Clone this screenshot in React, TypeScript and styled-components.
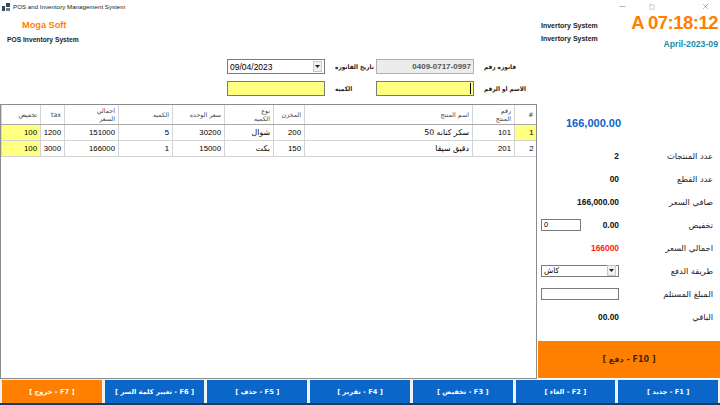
import React from 'react'
import styled, { createGlobalStyle } from 'styled-components'
import { Minus, Square, X } from 'lucide-react'

const GlobalStyle = createGlobalStyle`
  html, body {
    margin: 0;
    padding: 0;
    background: #fff;
  }
  body {
    width: 720px;
    height: 405px;
    overflow: hidden;
    font-family: 'DejaVu Sans', 'Liberation Sans', sans-serif;
  }
`

const Window = styled.div`
  width: 720px;
  height: 405px;
  display: flex;
  flex-direction: column;
  background: #fff;
`

const TitleBar = styled.div`
  height: 13px;
  display: flex;
  align-items: center;
  padding-left: 2px;
`

const TitleText = styled.span`
  flex: 1;
  margin-left: 3px;
  font-family: 'Liberation Sans', sans-serif;
  font-size: 6.2px;
  color: #222;
`

const WinButton = styled.span<{ $gap?: number }>`
  width: 29px;
  margin-left: ${p => p.$gap || 0}px;
  display: flex;
  justify-content: center;
  color: #444;
`

const TopRow = styled.div`
  height: 42px;
  display: flex;
`

const Brand = styled.div`
  flex: 1;
  display: flex;
  flex-direction: column;
  padding-left: 7px;
  font-family: 'Liberation Sans', sans-serif;
  font-weight: bold;
`

const BrandName = styled.div`
  margin: 7px 0 0 15px;
  font-size: 9.2px;
  color: #ff7f00;
`

const BrandSub = styled.div`
  margin-top: 6px;
  font-size: 6.7px;
  color: #222;
`

const SysLabels = styled.div`
  width: 87px;
  display: flex;
  flex-direction: column;
  gap: 6px;
  padding-top: 9px;
  font-family: 'Liberation Sans', sans-serif;
  font-weight: bold;
  font-size: 7px;
  color: #222;
`

const ClockBox = styled.div`
  width: 90px;
  display: flex;
  flex-direction: column;
  align-items: flex-end;
  padding-right: 2px;
  font-family: 'Liberation Sans', sans-serif;
  font-weight: bold;
`

const Clock = styled.div`
  font-size: 18.5px;
  letter-spacing: -0.5px;
  line-height: 20px;
  color: #ff7f00;
`

const DateText = styled.div`
  margin-top: 6px;
  font-size: 8.7px;
  color: #1a8ca8;
`

const Form = styled.div`
  display: grid;
  grid-template-columns: 98px 51px 98px auto;
  grid-auto-rows: 15px;
  row-gap: 7px;
  margin: 4px 0 8px 227px;
  align-items: center;
`

const FieldLabel = styled.div`
  padding-left: 10px;
  font-family: 'DejaVu Sans Condensed', 'DejaVu Sans', sans-serif;
  font-stretch: condensed;
  font-size: 6.4px;
  font-weight: bold;
  color: #222;
  white-space: nowrap;
`

const TextBox = styled.div<{ $bg?: string }>`
  width: 98px;
  height: 15px;
  box-sizing: border-box;
  border: 1px solid #7a7a7a;
  background: ${p => p.$bg || '#fff'};
  display: flex;
  align-items: center;
  padding: 0 2px;
  font-family: 'Liberation Sans', sans-serif;
  font-size: 8.5px;
  color: #000;
`

const InvoiceBox = styled(TextBox)`
  justify-content: flex-end;
  border-color: #b0b0b0;
  font-weight: bold;
  font-size: 8px;
  color: #555;
`

const Caret = styled.span`
  margin-left: auto;
  width: 1px;
  height: 11px;
  background: #000;
`

const DropButton = styled.span`
  margin-left: auto;
  width: 9px;
  height: 11px;
  box-sizing: border-box;
  border: 1px solid #c8c8c8;
  background: #f2f2f2;
  display: flex;
  align-items: center;
  justify-content: center;
`

const Main = styled.div`
  height: 275px;
  display: flex;
`

const GridBox = styled.div`
  width: 537px;
  height: 275px;
  box-sizing: border-box;
  border: 1px solid #8c8c8c;
  overflow: hidden;
  background: #fff;
`

const Table = styled.table`
  direction: rtl;
  width: 535px;
  table-layout: fixed;
  border-collapse: collapse;
`

const HeadCell = styled.th`
  height: 19px;
  padding: 0 3px;
  border-left: 1px solid #d4d4d4;
  border-bottom: 1px solid #a8a8a8;
  text-align: right;
  vertical-align: middle;
  font-weight: normal;
  font-size: 6.3px;
  line-height: 8px;
  color: #444;
  overflow: hidden;
`

const Cell = styled.td<{ $hl?: boolean }>`
  height: 15px;
  padding: 0 3px;
  border-left: 1px solid #d4d4d4;
  border-bottom: 1px solid #d4d4d4;
  background: ${p => (p.$hl ? '#ffff80' : '#fff')};
  text-align: right;
  font-family: 'Liberation Sans', 'DejaVu Sans', sans-serif;
  font-size: 7.8px;
  color: #000;
  white-space: nowrap;
  overflow: hidden;
`

const ArabicCell = styled(Cell)`
  font-family: 'DejaVu Sans', sans-serif;
  font-size: 7.8px;
`

const Side = styled.div`
  flex: 1;
  display: flex;
  flex-direction: column;
`

const GrandTotal = styled.div`
  height: 22px;
  margin: 8px 0 10px 29px;
  display: flex;
  align-items: center;
  font-family: 'Liberation Sans', sans-serif;
  font-weight: bold;
  font-size: 11px;
  color: #0b63c4;
`

const SumRow = styled.div`
  height: 23px;
  display: flex;
  align-items: center;
  padding-left: 4px;
`

const SumValue = styled.div<{ $color?: string }>`
  width: 78px;
  display: flex;
  align-items: center;
  justify-content: space-between;
  font-family: 'Liberation Sans', sans-serif;
  font-weight: bold;
  font-size: 8.4px;
  color: ${p => p.$color || '#111'};
`

const SumLabel = styled.div`
  flex: 1;
  direction: rtl;
  text-align: right;
  padding-right: 7px;
  font-size: 8.3px;
  color: #222;
`

const SmallInput = styled.div<{ $w: number }>`
  width: ${p => p.$w}px;
  height: 12px;
  box-sizing: border-box;
  border: 1px solid #7a7a7a;
  background: #fff;
  display: flex;
  align-items: center;
  padding: 0 2px;
  font-family: 'Liberation Sans', 'DejaVu Sans', sans-serif;
  font-weight: normal;
  font-size: 7.5px;
  color: #000;
`

const PayButton = styled.div`
  height: 37px;
  margin: auto 0 1px 1px;
  background: #ff8000;
  display: flex;
  align-items: center;
  justify-content: center;
  direction: rtl;
  font-weight: bold;
  font-size: 8px;
  color: #4a2600;
`

const FKeyBar = styled.div`
  height: 26px;
  box-sizing: border-box;
  display: flex;
  direction: rtl;
  gap: 3px;
  padding: 1px 2px 0;
  background: #eef2f6;
  border-bottom: 2px solid #1d3a5c;
`

const FKey = styled.div<{ $accent?: boolean }>`
  flex: 1;
  height: 23px;
  display: flex;
  align-items: center;
  justify-content: center;
  background: ${p => (p.$accent ? '#ff8000' : '#0a66c8')};
  color: #fff;
  font-weight: bold;
  font-size: 6.7px;
`

const AppIcon = () => (
  <svg width="8" height="8" viewBox="0 0 8 8">
    <rect x="0" y="3" width="3" height="5" fill="#3a4a5c" />
    <rect x="4" y="0" width="4" height="4" fill="#3a4a5c" />
    <rect x="4" y="5" width="4" height="3" fill="#6b7b8c" />
  </svg>
)

const DownArrow = () => (
  <svg width="5" height="3" viewBox="0 0 5 3">
    <path d="M0 0 L5 0 L2.5 3 Z" fill="#222" />
  </svg>
)

interface Column {
  title: React.ReactNode
  width: number
}

const columns: Column[] = [
  { title: '#', width: 22 },
  { title: <>رقم<br />المنتج</>, width: 42 },
  { title: 'اسم المنتج', width: 168 },
  { title: 'المخزن', width: 31 },
  { title: <>نوع<br />الكميه</>, width: 49 },
  { title: 'سعر الوحده', width: 52 },
  { title: 'الكميه', width: 54 },
  { title: <>اجمالي<br />السعر</>, width: 54 },
  { title: 'tax', width: 24 },
  { title: 'تخفيض', width: 39 }
]

const items = [
  { no: '1', code: '101', name: 'سكر كنانه 50', stock: '200', unit: 'شوال', price: '30200', qty: '5', total: '151000', tax: '1200', disc: '100' },
  { no: '2', code: '201', name: 'دقيق سيقا', stock: '150', unit: 'بكت', price: '15000', qty: '1', total: '166000', tax: '3000', disc: '100' }
]

const fKeys = [
  '[ F1 - جديد ]',
  '[ F2 - الغاء ]',
  '[ F3 - تخفيض ]',
  '[ F4 - تقرير ]',
  '[ F5 - حذف ]',
  '[ F6 - تغيير كلمة السر ]',
  '[ F7 - خروج ]'
]

const App: React.FC = () => {
  return (
    <Window>
      <GlobalStyle />
      <TitleBar>
        <AppIcon />
        <TitleText>POS and Inventory Management System</TitleText>
        <WinButton><Minus size={9} strokeWidth={1} /></WinButton>
        <WinButton><Square size={6} strokeWidth={1} /></WinButton>
        <WinButton $gap={25}><X size={9} strokeWidth={1} /></WinButton>
      </TitleBar>

      <TopRow>
        <Brand>
          <BrandName>Moga Soft</BrandName>
          <BrandSub>POS Inventory System</BrandSub>
        </Brand>
        <SysLabels>
          <div>Invertory System</div>
          <div>Invertory System</div>
        </SysLabels>
        <ClockBox>
          <Clock>A 07:18:12</Clock>
          <DateText>April-2023-09</DateText>
        </ClockBox>
      </TopRow>

      <Form>
        <TextBox>
          09/04/2023
          <DropButton><DownArrow /></DropButton>
        </TextBox>
        <FieldLabel>تاريخ الفاتوره</FieldLabel>
        <InvoiceBox $bg="#ececec">0409-0717-0997</InvoiceBox>
        <FieldLabel>فاتوره رقم</FieldLabel>
        <TextBox $bg="#ffff80" />
        <FieldLabel>الكميه</FieldLabel>
        <TextBox $bg="#ffff80">
          <Caret />
        </TextBox>
        <FieldLabel>الاسم او الرقم</FieldLabel>
      </Form>

      <Main>
        <GridBox>
          <Table>
            <colgroup>
              {columns.map((c, i) => (
                <col key={i} style={{ width: c.width }} />
              ))}
            </colgroup>
            <thead>
              <tr>
                {columns.map((c, i) => (
                  <HeadCell key={i}>{c.title}</HeadCell>
                ))}
              </tr>
            </thead>
            <tbody>
              {items.map((r, i) => (
                <tr key={r.no}>
                  <Cell $hl={i === 0}>{r.no}</Cell>
                  <Cell>{r.code}</Cell>
                  <ArabicCell>{r.name}</ArabicCell>
                  <Cell>{r.stock}</Cell>
                  <ArabicCell>{r.unit}</ArabicCell>
                  <Cell>{r.price}</Cell>
                  <Cell>{r.qty}</Cell>
                  <Cell>{r.total}</Cell>
                  <Cell>{r.tax}</Cell>
                  <Cell $hl>{r.disc}</Cell>
                </tr>
              ))}
            </tbody>
          </Table>
        </GridBox>

        <Side>
          <GrandTotal>166,000.00</GrandTotal>
          <SumRow>
            <SumValue><span /><span>2</span></SumValue>
            <SumLabel>عدد المنتجات</SumLabel>
          </SumRow>
          <SumRow>
            <SumValue><span /><span>00</span></SumValue>
            <SumLabel>عدد القطع</SumLabel>
          </SumRow>
          <SumRow>
            <SumValue><span /><span>166,000.00</span></SumValue>
            <SumLabel>صافي السعر</SumLabel>
          </SumRow>
          <SumRow>
            <SumValue>
              <SmallInput $w={40}>0</SmallInput>
              <span>0.00</span>
            </SumValue>
            <SumLabel>تخفيض</SumLabel>
          </SumRow>
          <SumRow>
            <SumValue $color="#ff1a1a"><span /><span>166000</span></SumValue>
            <SumLabel>اجمالي السعر</SumLabel>
          </SumRow>
          <SumRow>
            <SumValue>
              <SmallInput $w={79}>
                <span style={{ fontFamily: 'DejaVu Sans' }}>كاش</span>
                <DropButton><DownArrow /></DropButton>
              </SmallInput>
            </SumValue>
            <SumLabel>طريقة الدفع</SumLabel>
          </SumRow>
          <SumRow>
            <SumValue>
              <SmallInput $w={79} />
            </SumValue>
            <SumLabel>المبلغ المستلم</SumLabel>
          </SumRow>
          <SumRow>
            <SumValue><span /><span>00.00</span></SumValue>
            <SumLabel>الباقي</SumLabel>
          </SumRow>
          <PayButton>[ F10 - دفع ]</PayButton>
        </Side>
      </Main>

      <FKeyBar>
        {fKeys.map((k, i) => (
          <FKey key={k} $accent={i === fKeys.length - 1}>{k}</FKey>
        ))}
      </FKeyBar>
    </Window>
  )
}

export default App
